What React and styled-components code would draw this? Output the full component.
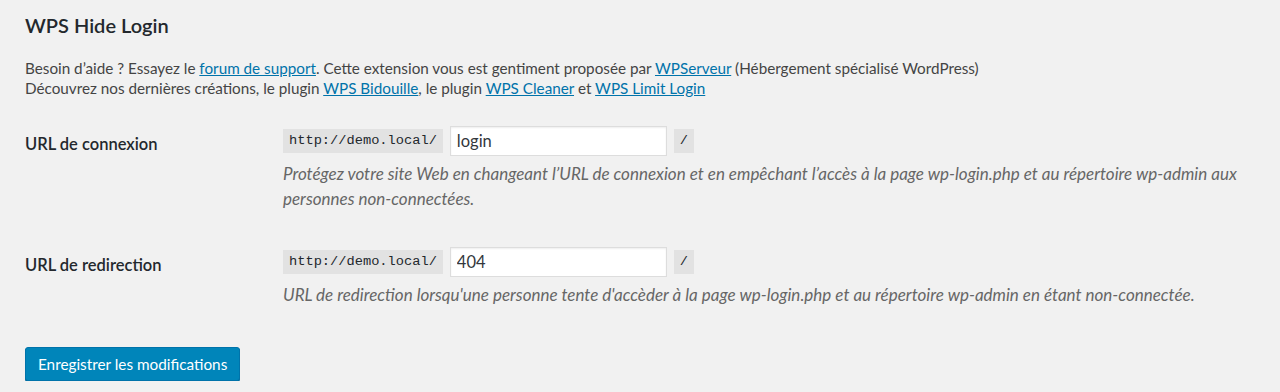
import React from 'react';
import styled, { createGlobalStyle } from 'styled-components';

const GlobalStyle = createGlobalStyle`
  html, body {
    margin: 0;
    padding: 0;
    background: #f1f1f1;
  }
  body {
    font-family: Lato, "Liberation Sans", sans-serif;
    color: #444;
  }
`;

const Wrap = styled.div`
  padding: 10px 25px 0;
`;

const Title = styled.h2`
  margin: 0;
  font-size: 20px;
  font-weight: 600;
  line-height: 30px;
  color: #23282d;
`;

const Intro = styled.p`
  margin: 18px 0 0;
  font-size: 15.25px;
  line-height: 20px;
`;

const Link = styled.a`
  color: #0073aa;
  text-decoration: underline;
`;

const Table = styled.div`
  margin-top: 25px;
  display: flex;
  flex-direction: column;
  gap: 33px;
`;

const Row = styled.div`
  display: grid;
  grid-template-columns: 258px 1fr;
`;

const Label = styled.div`
  font-size: 16.5px;
  font-weight: 600;
  color: #23282d;
  line-height: 30px;
  padding-top: 6px;
`;

const Field = styled.div`
  display: flex;
  align-items: center;
  gap: 7px;
  height: 36px;
`;

const Code = styled.code`
  font-family: "Liberation Mono", monospace;
  font-size: 13.7px;
  background: #e2e2e2;
  color: #23282d;
  padding: 0 6px;
  line-height: 24px;
`;

const Input = styled.input`
  box-sizing: border-box;
  width: 217px;
  height: 30px;
  border: 1px solid #ddd;
  background: #fff;
  box-shadow: inset 0 1px 2px rgba(0, 0, 0, 0.07);
  font-family: Lato, "Liberation Sans", sans-serif;
  font-size: 16.5px;
  color: #32373c;
  padding: 0 6px;
  outline: none;
`;

const Description = styled.p`
  margin: 3px 0 0;
  font-size: 17px;
  font-style: italic;
  color: #666;
  line-height: 24.5px;
`;

const Button = styled.button`
  margin-top: 39px;
  height: 34px;
  padding: 0 12px;
  background: #0085ba;
  border: 1px solid #0073aa;
  border-radius: 3px;
  box-shadow: 0 1px 0 #006799;
  color: #fff;
  font-family: Lato, "Liberation Sans", sans-serif;
  font-size: 15.3px;
  cursor: pointer;
`;

const fields = [
  {
    label: 'URL de connexion',
    value: 'login',
    help:
      "Protégez votre site Web en changeant l’URL de connexion et en empêchant l’accès à la page wp-login.php et au répertoire wp-admin aux personnes non-connectées.",
  },
  {
    label: 'URL de redirection',
    value: '404',
    help:
      "URL de redirection lorsqu'une personne tente d'accèder à la page wp-login.php et au répertoire wp-admin en étant non-connectée.",
  },
];

const App = () => (
  <Wrap>
    <GlobalStyle />
    <Title>WPS Hide Login</Title>
    <Intro>
      Besoin d’aide ? Essayez le <Link href="#">forum de support</Link>. Cette extension vous est gentiment
      proposée par <Link href="#">WPServeur</Link> (Hébergement spécialisé WordPress)
      <br />
      Découvrez nos dernières créations, le plugin <Link href="#">WPS Bidouille</Link>, le plugin{' '}
      <Link href="#">WPS Cleaner</Link> et <Link href="#">WPS Limit Login</Link>
    </Intro>
    <Table>
      {fields.map(({ label, value, help }) => (
        <Row key={label}>
          <Label>{label}</Label>
          <div>
            <Field>
              <Code>http://demo.local/</Code>
              <Input defaultValue={value} />
              <Code>/</Code>
            </Field>
            <Description>{help}</Description>
          </div>
        </Row>
      ))}
    </Table>
    <Button>Enregistrer les modifications</Button>
  </Wrap>
);

export default App;
